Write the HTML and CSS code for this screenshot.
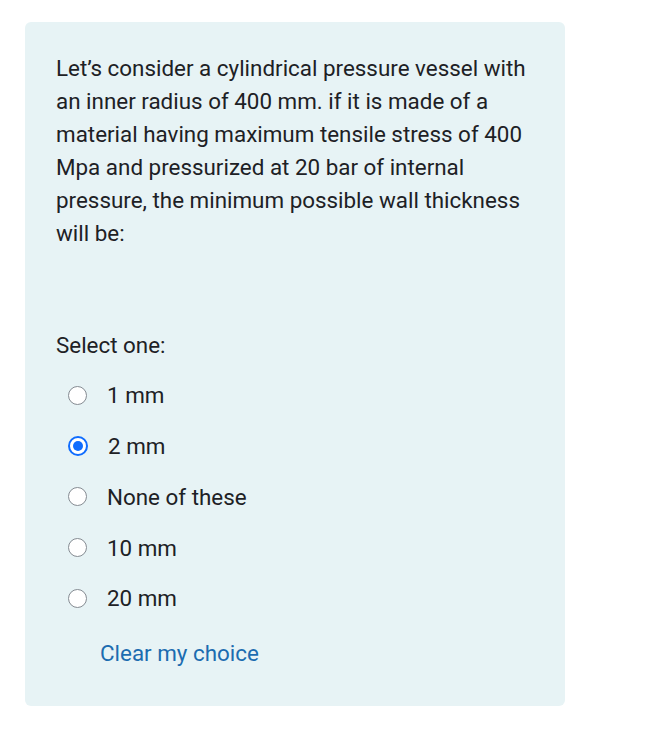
FILE: index.html
```html
<!DOCTYPE html>
<html>
<head>
<meta charset="utf-8">
<link rel="stylesheet" href="styles.css">
</head>
<body>
<div class="card">
  <p class="question">Let’s consider a cylindrical pressure vessel with an inner radius of 400 mm. if it is made of a material having maximum tensile stress of 400 Mpa and pressurized at 20 bar of internal pressure, the minimum possible wall thickness will be:</p>
  <div class="prompt">Select one:</div>
  <div class="options">
    <div class="option"><span class="radio"></span><span class="label">1 mm</span></div>
    <div class="option"><span class="radio checked"></span><span class="label">2 mm</span></div>
    <div class="option"><span class="radio"></span><span class="label">None of these</span></div>
    <div class="option"><span class="radio"></span><span class="label">10 mm</span></div>
    <div class="option"><span class="radio"></span><span class="label">20 mm</span></div>
  </div>
  <a class="clear" href="#">Clear my choice</a>
</div>
</body>
</html>
```
FILE: styles.css
```css
html, body {
  margin: 0;
  padding: 0;
  background: #ffffff;
}
body {
  font-family: Roboto, "Liberation Sans", sans-serif;
  color: #1d2125;
  font-size: 22.4px;
  padding: 22px 0 0 25px;
}
.card {
  width: 540px;
  box-sizing: border-box;
  background: #e7f3f5;
  border-radius: 6px;
  padding: 30px 18px 36px 31px;
}
.question {
  margin: 0;
  line-height: 33px;
}
.prompt {
  margin-top: 79px;
  line-height: 33px;
}
.options {
  margin-top: 8px;
  display: flex;
  flex-direction: column;
}
.option {
  display: flex;
  align-items: center;
  height: 50.75px;
  padding-left: 12px;
}
.radio {
  width: 17px;
  height: 17px;
  border: 1.5px solid #858b92;
  border-radius: 50%;
  background: #fff;
  flex: none;
  margin-right: 20px;
  box-sizing: content-box;
  position: relative;
}
.radio.checked {
  border: 2px solid #0f6cfe;
  width: 16px;
  height: 16px;
}
.radio.checked::after {
  content: "";
  position: absolute;
  left: 3px;
  top: 3px;
  width: 10px;
  height: 10px;
  border-radius: 50%;
  background: #0f6cfe;
}
.label {
  line-height: 24px;
}
.clear {
  display: inline-block;
  margin-top: 13px;
  margin-left: 44px;
  color: #1c6cb0;
  text-decoration: none;
  line-height: 33px;
}
```
